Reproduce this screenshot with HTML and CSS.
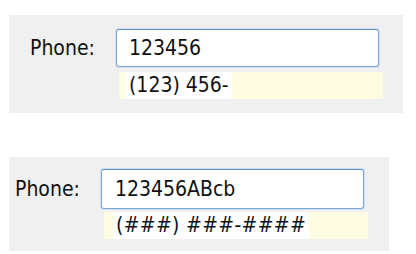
FILE: index.html
```html
<!DOCTYPE html>
<html lang="en">
<head>
  <meta charset="UTF-8">
  <title>Phone mask</title>
  <link rel="stylesheet" href="styles.css">
</head>
<body>
  <div class="panel panel-first">
    <label class="label" for="phone1">Phone:</label>
    <input class="field" id="phone1" type="text" value="123456">
    <div class="hint"><span class="hint-text">(123) 456-</span></div>
  </div>

  <div class="panel panel-second">
    <label class="label" for="phone2">Phone:</label>
    <input class="field" id="phone2" type="text" value="123456ABcb">
    <div class="hint"><span class="hint-text">(###) ###-####</span></div>
  </div>
</body>
</html>
```

FILE: styles.css
```css
body {
  margin: 0;
  padding: 0;
  background: #fff;
  font-family: "DejaVu Sans Condensed", "DejaVu Sans", sans-serif;
  font-stretch: condensed;
  font-size: 21px;
  color: #111;
}

.panel {
  display: grid;
  grid-template-columns: 86px 263px;
  grid-template-rows: auto auto;
  row-gap: 5px;
  align-items: center;
  background: #f0f0f0;
  margin-left: 9px;
  box-sizing: border-box;
}

.panel-first {
  width: 394px;
  margin-top: 15px;
  padding: 14px 0 14px 21px;
}

.panel-second {
  width: 380px;
  margin-top: 44px;
  padding: 12px 0 12px 6px;
  row-gap: 3px;
}

.label {
  grid-column: 1;
  grid-row: 1;
}

.field {
  grid-column: 2;
  grid-row: 1;
  height: 38px;
  box-sizing: border-box;
  margin: 0;
  padding: 0 12px;
  font: inherit;
  color: #111;
  background: #fff;
  border: 1px solid #7fa6d3;
  border-top-color: #5f8fc8;
  border-radius: 3px;
  box-shadow: 0 0 0 1px #cfe0f3;
  outline: none;
}

.panel-second .field {
  height: 40px;
  padding-left: 13px;
}

.hint {
  grid-column: 2;
  grid-row: 2;
  margin-left: 3px;
  width: 264px;
  height: 27px;
  background: #fffde1;
  padding-left: 7px;
  box-sizing: border-box;
  display: flex;
}

.panel-second .hint {
  padding-left: 9px;
}

.hint-text {
  background: #fff;
  line-height: 27px;
  padding: 0 3px;
}

.panel-second .hint-text {
  letter-spacing: 0.3px;
}
```
